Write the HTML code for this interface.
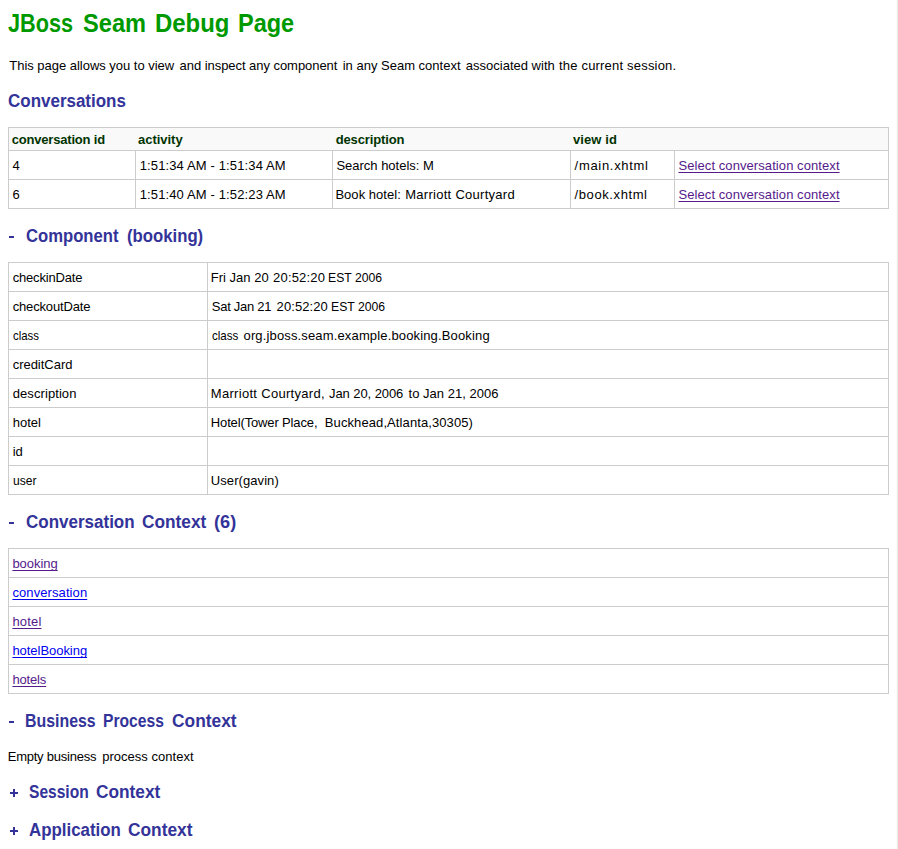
<!DOCTYPE html>
<html><head><meta charset="utf-8"><title>JBoss Seam Debug Page</title>
<style>
html,body{margin:0;padding:0;background:#fff;}
body{width:898px;height:849px;position:relative;overflow:hidden;font-family:"Liberation Sans",sans-serif;}
.l{position:absolute;}
.t{position:absolute;white-space:pre;transform-origin:0 0;font-family:"Liberation Sans",sans-serif;}
</style></head><body>
<div class="l" style="left:9px;top:128px;width:879px;height:22px;background:#f9f9f9"></div>
<div class="l" style="left:8px;top:127px;width:881px;height:1px;background:#cccccc"></div>
<div class="l" style="left:8px;top:150px;width:881px;height:1px;background:#cccccc"></div>
<div class="l" style="left:8px;top:179px;width:881px;height:1px;background:#cccccc"></div>
<div class="l" style="left:8px;top:208px;width:881px;height:1px;background:#cccccc"></div>
<div class="l" style="left:8px;top:127px;width:1px;height:82px;background:#cccccc"></div>
<div class="l" style="left:888px;top:127px;width:1px;height:82px;background:#cccccc"></div>
<div class="l" style="left:135px;top:150px;width:1px;height:59px;background:#cccccc"></div>
<div class="l" style="left:332px;top:150px;width:1px;height:59px;background:#cccccc"></div>
<div class="l" style="left:570px;top:150px;width:1px;height:59px;background:#cccccc"></div>
<div class="l" style="left:674px;top:150px;width:1px;height:59px;background:#cccccc"></div>
<div class="l" style="left:8px;top:262px;width:881px;height:1px;background:#cccccc"></div>
<div class="l" style="left:8px;top:291px;width:881px;height:1px;background:#cccccc"></div>
<div class="l" style="left:8px;top:320px;width:881px;height:1px;background:#cccccc"></div>
<div class="l" style="left:8px;top:349px;width:881px;height:1px;background:#cccccc"></div>
<div class="l" style="left:8px;top:378px;width:881px;height:1px;background:#cccccc"></div>
<div class="l" style="left:8px;top:407px;width:881px;height:1px;background:#cccccc"></div>
<div class="l" style="left:8px;top:436px;width:881px;height:1px;background:#cccccc"></div>
<div class="l" style="left:8px;top:465px;width:881px;height:1px;background:#cccccc"></div>
<div class="l" style="left:8px;top:494px;width:881px;height:1px;background:#cccccc"></div>
<div class="l" style="left:8px;top:262px;width:1px;height:233px;background:#cccccc"></div>
<div class="l" style="left:888px;top:262px;width:1px;height:233px;background:#cccccc"></div>
<div class="l" style="left:207px;top:262px;width:1px;height:233px;background:#cccccc"></div>
<div class="l" style="left:8px;top:548px;width:881px;height:1px;background:#cccccc"></div>
<div class="l" style="left:8px;top:577px;width:881px;height:1px;background:#cccccc"></div>
<div class="l" style="left:8px;top:606px;width:881px;height:1px;background:#cccccc"></div>
<div class="l" style="left:8px;top:635px;width:881px;height:1px;background:#cccccc"></div>
<div class="l" style="left:8px;top:664px;width:881px;height:1px;background:#cccccc"></div>
<div class="l" style="left:8px;top:693px;width:881px;height:1px;background:#cccccc"></div>
<div class="l" style="left:8px;top:548px;width:1px;height:146px;background:#cccccc"></div>
<div class="l" style="left:888px;top:548px;width:1px;height:146px;background:#cccccc"></div>
<div class="l" style="left:9px;top:236px;width:5px;height:2px;background:#333399"></div>
<div class="l" style="left:9px;top:522px;width:5px;height:2px;background:#333399"></div>
<div class="l" style="left:9px;top:721px;width:5px;height:2px;background:#333399"></div>
<div class="l" style="left:10px;top:792px;width:8px;height:2px;background:#333399"></div>
<div class="l" style="left:13px;top:789px;width:2px;height:8px;background:#333399"></div>
<div class="l" style="left:10px;top:830px;width:8px;height:2px;background:#333399"></div>
<div class="l" style="left:13px;top:827px;width:2px;height:8px;background:#333399"></div>
<div class="l" style="left:896px;top:0;width:1px;height:849px;background:#fbfbf9"></div>
<div class="l" style="left:897px;top:0;width:1px;height:849px;background:#ecece4"></div>
<span class="t" style="left:8.35px;top:7.00px;font-size:26px;line-height:32px;color:#009900;transform:scaleX(0.8334);font-weight:bold;">JBoss</span>
<span class="t" style="left:83.00px;top:7.00px;font-size:26px;line-height:32px;color:#009900;transform:scaleX(0.9083);font-weight:bold;">Seam</span>
<span class="t" style="left:154.93px;top:7.00px;font-size:26px;line-height:32px;color:#009900;transform:scaleX(0.9196);font-weight:bold;">Debug</span>
<span class="t" style="left:237.60px;top:7.00px;font-size:26px;line-height:32px;color:#009900;transform:scaleX(0.903);font-weight:bold;">Page</span>
<span class="t" style="left:9.30px;top:57.00px;font-size:13px;line-height:17px;color:#000;letter-spacing:-0.022px;">This page allows you to view</span>
<span class="t" style="left:179.60px;top:57.00px;font-size:13px;line-height:17px;color:#000;letter-spacing:-0.049px;">and inspect any component</span>
<span class="t" style="left:342.70px;top:57.00px;font-size:13px;line-height:17px;color:#000;letter-spacing:0.001px;">in any Seam context</span>
<span class="t" style="left:465.80px;top:57.00px;font-size:13px;line-height:17px;color:#000;letter-spacing:0.004px;">associated with</span>
<span class="t" style="left:559.00px;top:57.00px;font-size:13px;line-height:17px;color:#000;letter-spacing:0.193px;">the current session.</span>
<span class="t" style="left:8.40px;top:90.00px;font-size:18px;line-height:22px;color:#333399;transform:scaleX(0.943);font-weight:bold;">Conversations</span>
<span class="t" style="left:11.70px;top:131.00px;font-size:13px;line-height:17px;color:#003300;letter-spacing:-0.188px;font-weight:bold;">conversation id</span>
<span class="t" style="left:138.00px;top:131.00px;font-size:13px;line-height:17px;color:#003300;letter-spacing:-0.025px;font-weight:bold;">activity</span>
<span class="t" style="left:335.70px;top:131.00px;font-size:13px;line-height:17px;color:#003300;letter-spacing:-0.122px;font-weight:bold;">description</span>
<span class="t" style="left:573.00px;top:131.00px;font-size:13px;line-height:17px;color:#003300;letter-spacing:0.099px;font-weight:bold;">view id</span>
<span class="t" style="left:12.40px;top:157.00px;font-size:13px;line-height:17px;color:#000;">4</span>
<span class="t" style="left:139.70px;top:157.00px;font-size:13px;line-height:17px;color:#000;letter-spacing:0.132px;">1:51:34 AM - 1:51:34 AM</span>
<span class="t" style="left:336.40px;top:157.00px;font-size:13px;line-height:17px;color:#000;letter-spacing:-0.008px;">Search hotels: M</span>
<span class="t" style="left:574.60px;top:157.00px;font-size:13px;line-height:17px;color:#000;letter-spacing:0.693px;">/main.xhtml</span>
<span class="t" style="left:678.50px;top:157.00px;font-size:13px;line-height:17px;color:#551a8b;letter-spacing:0.078px;text-decoration:underline;text-decoration-skip-ink:none;text-underline-offset:2px;text-decoration-thickness:1px;">Select conversation context</span>
<span class="t" style="left:12.40px;top:186.00px;font-size:13px;line-height:17px;color:#000;">6</span>
<span class="t" style="left:139.70px;top:186.00px;font-size:13px;line-height:17px;color:#000;letter-spacing:0.132px;">1:51:40 AM - 1:52:23 AM</span>
<span class="t" style="left:335.40px;top:186.00px;font-size:13px;line-height:17px;color:#000;letter-spacing:0.037px;">Book hotel:</span>
<span class="t" style="left:405.20px;top:186.00px;font-size:13px;line-height:17px;color:#000;letter-spacing:0.281px;">Marriott Courtyard</span>
<span class="t" style="left:574.60px;top:186.00px;font-size:13px;line-height:17px;color:#000;letter-spacing:0.592px;">/book.xhtml</span>
<span class="t" style="left:678.50px;top:186.00px;font-size:13px;line-height:17px;color:#551a8b;letter-spacing:0.078px;text-decoration:underline;text-decoration-skip-ink:none;text-underline-offset:2px;text-decoration-thickness:1px;">Select conversation context</span>
<span class="t" style="left:25.90px;top:225.00px;font-size:18px;line-height:22px;color:#333399;transform:scaleX(0.9251);font-weight:bold;">Component</span>
<span class="t" style="left:126.90px;top:225.00px;font-size:18px;line-height:22px;color:#333399;transform:scaleX(0.9295);font-weight:bold;">(booking)</span>
<span class="t" style="left:12.70px;top:269.00px;font-size:13px;line-height:17px;color:#000;letter-spacing:-0.181px;">checkinDate</span>
<span class="t" style="left:210.80px;top:269.00px;font-size:13px;line-height:17px;color:#000;letter-spacing:0.003px;">Fri Jan 20</span>
<span class="t" style="left:273.10px;top:269.00px;font-size:13px;line-height:17px;color:#000;letter-spacing:0.175px;">20:52:20</span>
<span class="t" style="left:328.06px;top:269.00px;font-size:13px;line-height:17px;color:#000;transform:scaleX(0.9384);">EST 2006</span>
<span class="t" style="left:12.70px;top:298.00px;font-size:13px;line-height:17px;color:#000;letter-spacing:-0.16px;">checkoutDate</span>
<span class="t" style="left:211.80px;top:298.00px;font-size:13px;line-height:17px;color:#000;letter-spacing:-0.27px;">Sat Jan 21</span>
<span class="t" style="left:276.60px;top:298.00px;font-size:13px;line-height:17px;color:#000;letter-spacing:0.089px;">20:52:20</span>
<span class="t" style="left:331.26px;top:298.00px;font-size:13px;line-height:17px;color:#000;transform:scaleX(0.9384);">EST 2006</span>
<span class="t" style="left:12.70px;top:327.00px;font-size:13px;line-height:17px;color:#000;transform:scaleX(0.8765);">class</span>
<span class="t" style="left:211.80px;top:327.00px;font-size:13px;line-height:17px;color:#000;transform:scaleX(0.8865);">class</span>
<span class="t" style="left:243.50px;top:327.00px;font-size:13px;line-height:17px;color:#000;letter-spacing:0.148px;">org.jboss.seam.example.booking.Booking</span>
<span class="t" style="left:12.70px;top:356.00px;font-size:13px;line-height:17px;color:#000;letter-spacing:-0.026px;">creditCard</span>
<span class="t" style="left:12.70px;top:385.00px;font-size:13px;line-height:17px;color:#000;letter-spacing:0.086px;">description</span>
<span class="t" style="left:210.80px;top:385.00px;font-size:13px;line-height:17px;color:#000;letter-spacing:0.303px;">Marriott Courtyard,</span>
<span class="t" style="left:329.00px;top:385.00px;font-size:13px;line-height:17px;color:#000;letter-spacing:-0.077px;">Jan 20, 2006</span>
<span class="t" style="left:408.50px;top:385.00px;font-size:13px;line-height:17px;color:#000;letter-spacing:0.029px;">to Jan 21, 2006</span>
<span class="t" style="left:12.70px;top:414.00px;font-size:13px;line-height:17px;color:#000;letter-spacing:0.025px;">hotel</span>
<span class="t" style="left:210.80px;top:414.00px;font-size:13px;line-height:17px;color:#000;letter-spacing:-0.14px;">Hotel(Tower Place,</span>
<span class="t" style="left:324.80px;top:414.00px;font-size:13px;line-height:17px;color:#000;letter-spacing:0.097px;">Buckhead,Atlanta,30305)</span>
<span class="t" style="left:12.70px;top:443.00px;font-size:13px;line-height:17px;color:#000;letter-spacing:-0.188px;">id</span>
<span class="t" style="left:12.70px;top:472.00px;font-size:13px;line-height:17px;color:#000;transform:scaleX(0.9284);">user</span>
<span class="t" style="left:210.80px;top:472.00px;font-size:13px;line-height:17px;color:#000;letter-spacing:0.075px;">User(gavin)</span>
<span class="t" style="left:25.90px;top:511.00px;font-size:18px;line-height:22px;color:#333399;transform:scaleX(0.9445);font-weight:bold;">Conversation</span>
<span class="t" style="left:141.60px;top:511.00px;font-size:18px;line-height:22px;color:#333399;transform:scaleX(0.9596);font-weight:bold;">Context</span>
<span class="t" style="left:213.80px;top:511.00px;font-size:18px;line-height:22px;color:#333399;transform:scaleX(1.0089);font-weight:bold;">(6)</span>
<span class="t" style="left:12.40px;top:555.00px;font-size:13px;line-height:17px;color:#551a8b;letter-spacing:-0.035px;text-decoration:underline;text-decoration-skip-ink:none;text-underline-offset:2px;text-decoration-thickness:1px;">booking</span>
<span class="t" style="left:12.40px;top:584.00px;font-size:13px;line-height:17px;color:#0000ee;letter-spacing:0.093px;text-decoration:underline;text-decoration-skip-ink:none;text-underline-offset:2px;text-decoration-thickness:1px;">conversation</span>
<span class="t" style="left:12.40px;top:613.00px;font-size:13px;line-height:17px;color:#551a8b;letter-spacing:0.175px;text-decoration:underline;text-decoration-skip-ink:none;text-underline-offset:2px;text-decoration-thickness:1px;">hotel</span>
<span class="t" style="left:12.40px;top:642.00px;font-size:13px;line-height:17px;color:#0000ee;letter-spacing:-0.04px;text-decoration:underline;text-decoration-skip-ink:none;text-underline-offset:2px;text-decoration-thickness:1px;">hotelBooking</span>
<span class="t" style="left:12.40px;top:671.00px;font-size:13px;line-height:17px;color:#551a8b;letter-spacing:-0.158px;text-decoration:underline;text-decoration-skip-ink:none;text-underline-offset:2px;text-decoration-thickness:1px;">hotels</span>
<span class="t" style="left:25.02px;top:710.00px;font-size:18px;line-height:22px;color:#333399;transform:scaleX(0.8833);font-weight:bold;">Business</span>
<span class="t" style="left:102.83px;top:710.00px;font-size:18px;line-height:22px;color:#333399;transform:scaleX(0.8705);font-weight:bold;">Process</span>
<span class="t" style="left:171.80px;top:710.00px;font-size:18px;line-height:22px;color:#333399;transform:scaleX(0.9641);font-weight:bold;">Context</span>
<span class="t" style="left:7.70px;top:748.00px;font-size:13px;line-height:17px;color:#000;letter-spacing:-0.228px;">Empty business</span>
<span class="t" style="left:102.20px;top:748.00px;font-size:13px;line-height:17px;color:#000;letter-spacing:0.026px;">process context</span>
<span class="t" style="left:29.40px;top:781.00px;font-size:18px;line-height:22px;color:#333399;transform:scaleX(0.8643);font-weight:bold;">Session</span>
<span class="t" style="left:96.20px;top:781.00px;font-size:18px;line-height:22px;color:#333399;transform:scaleX(0.9596);font-weight:bold;">Context</span>
<span class="t" style="left:29.40px;top:819.00px;font-size:18px;line-height:22px;color:#333399;transform:scaleX(0.9371);font-weight:bold;">Application</span>
<span class="t" style="left:127.90px;top:819.00px;font-size:18px;line-height:22px;color:#333399;transform:scaleX(0.9626);font-weight:bold;">Context</span>
</body></html>
